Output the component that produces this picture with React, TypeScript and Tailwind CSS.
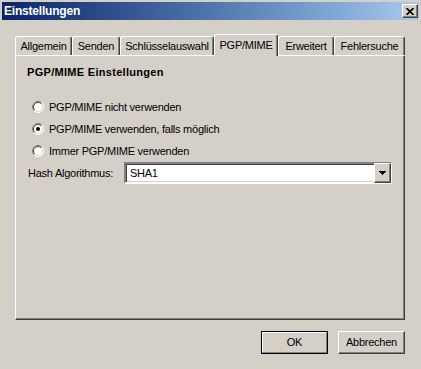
import React from "react";

const raised =
  "border border-t-white border-l-white border-r-[#404040] border-b-[#404040] shadow-[inset_-1px_-1px_0_#808080]";

function Tab({ label, w, active }: { label: string; w: string; active?: boolean }) {
  if (active) {
    return (
      <div
        className={`relative z-10 -mb-px flex h-[22px] ${w} items-start justify-center rounded-t-[3px] border-t border-l border-r border-t-white border-l-white border-r-[#404040] bg-[#d4d0c8] pt-[2px] shadow-[inset_-1px_0_0_#808080]`}
      >
        {label}
      </div>
    );
  }
  return (
    <div
      className={`flex h-[19px] ${w} items-center justify-center rounded-t-[3px] border-t border-l border-r border-t-white border-l-white border-r-[#404040] pt-px shadow-[inset_-1px_0_0_#808080]`}
    >
      {label}
    </div>
  );
}

function Radio({ checked }: { checked?: boolean }) {
  return (
    <svg width="12" height="12" viewBox="0 0 12 12" className="shrink-0">
      <circle cx="6" cy="6" r="5.5" fill="#fff" />
      <path d="M 2.1 9.9 A 5.5 5.5 0 0 1 9.9 2.1" stroke="#808080" fill="none" />
      <path d="M 9.9 2.1 A 5.5 5.5 0 0 1 2.1 9.9" stroke="#ffffff" fill="none" />
      <path d="M 2.8 9.2 A 4.5 4.5 0 0 1 9.2 2.8" stroke="#404040" fill="none" />
      <path d="M 9.2 2.8 A 4.5 4.5 0 0 1 2.8 9.2" stroke="#d4d0c8" fill="none" />
      {checked && <circle cx="6" cy="6" r="2" fill="#000" />}
    </svg>
  );
}

function RadioRow({ label, checked }: { label: string; checked?: boolean }) {
  return (
    <div className="flex h-[22px] items-center gap-[5px] pl-[5px]">
      <Radio checked={checked} />
      <span>{label}</span>
    </div>
  );
}

export default function App() {
  return (
    <div className="flex h-[369px] w-[421px] flex-col bg-[#d4d0c8] font-['Liberation_Sans',Arial,sans-serif] text-[11px] tracking-[-0.25px] text-black">
      {/* Title bar */}
      <div className="mx-[2px] mt-[2px] flex h-[18px] items-center justify-between bg-gradient-to-r from-[#0a246a] to-[#a6caf0] pl-[2px] pr-[1px]">
        <span className="text-[12px] font-bold tracking-[-0.2px] text-white">Einstellungen</span>
        <button className={`flex h-[14px] w-[16px] items-center justify-center bg-[#d4d0c8] ${raised}`}>
          <svg width="8" height="7" viewBox="0 0 8 7">
            <path d="M0.5 0 L7.5 7 M7.5 0 L0.5 7" stroke="#000" strokeWidth="1.6" />
          </svg>
        </button>
      </div>

      <div className="flex flex-col pl-[15px] pr-[16px] pt-[14px]">
        {/* Tabs */}
        <div className="flex h-[21px] items-end">
          <Tab label="Allgemein" w="w-[57px]" />
          <Tab label="Senden" w="w-[48px]" />
          <Tab label="Schlüsselauswahl" w="w-[94px]" />
          <Tab label="PGP/MIME" w="w-[64px]" active />
          <Tab label="Erweitert" w="w-[56px]" />
          <Tab label="Fehlersuche" w="w-[71px]" />
        </div>

        {/* Panel */}
        <div className="flex h-[265px] flex-col border border-t-white border-l-white border-r-[#404040] border-b-[#404040] pl-[11px] pt-[10px] shadow-[inset_-1px_-1px_0_#808080]">
          <div className="h-[13px] leading-[13px] font-bold tracking-[0.3px]">PGP/MIME Einstellungen</div>
          <div className="mt-[17px] flex flex-col">
            <RadioRow label="PGP/MIME nicht verwenden" />
            <RadioRow label="PGP/MIME verwenden, falls möglich" checked />
            <RadioRow label="Immer PGP/MIME verwenden" />
          </div>
          <div className="flex h-[22px] items-center">
            <span className="w-[97px] pl-px">Hash Algorithmus:</span>
            <div className="flex h-[22px] w-[268px] items-stretch border-2 border-t-[#808080] border-l-[#808080] border-r-white border-b-white bg-white shadow-[inset_1px_1px_0_#404040,inset_-1px_-1px_0_#d4d0c8]">
              <span className="flex flex-1 items-center pl-[4px]">SHA1</span>
              <div className={`my-[-1px] mr-[-1px] flex w-[17px] items-center justify-center bg-[#d4d0c8] ${raised}`}>
                <svg width="7" height="4" viewBox="0 0 7 4" shapeRendering="crispEdges">
                  <path d="M0 0h7v1h-1v1h-1v1h-1v1h-1v-1h-1v-1h-1v-1h-1z" fill="#000" />
                </svg>
              </div>
            </div>
          </div>
        </div>

        {/* Buttons */}
        <div className="mt-[11px] flex justify-end gap-[10px]">
          <button className="h-[23px] w-[67px] border border-black bg-[#d4d0c8]">
            <div className={`flex h-full w-full items-center justify-center ${raised} border-r-[#808080] border-b-[#808080] shadow-none`}>
              OK
            </div>
          </button>
          <button className={`flex h-[23px] w-[67px] items-center justify-center bg-[#d4d0c8] ${raised}`}>
            Abbrechen
          </button>
        </div>
      </div>
    </div>
  );
}
